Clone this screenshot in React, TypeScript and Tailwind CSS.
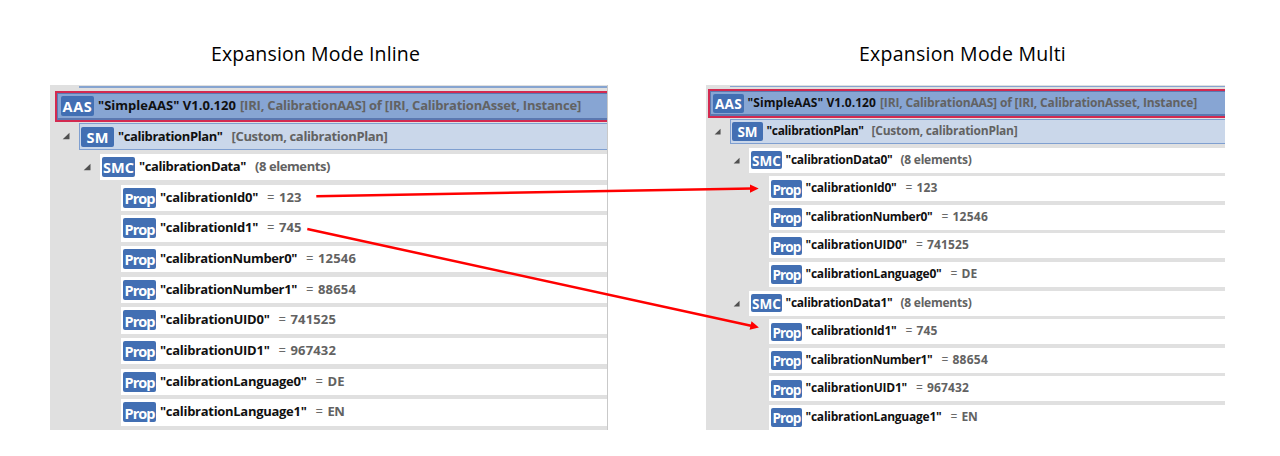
import { useLayoutEffect, useRef } from "react";
import clsx from "clsx";

type Kind = "AAS" | "SM" | "SMC" | "Prop";
// name, name width, gap before the detail, detail, detail width
type Row = [Kind, string, number, number, string, number];

const left: Row[] = [
  ["AAS", '"SimpleAAS" V1.0.120', 138, 4, "[IRI, CalibrationAAS] of [IRI, CalibrationAsset, Instance]", 341],
  ["SM", '"calibrationPlan"', 104.5, 9, "[Custom, calibrationPlan]", 156],
  ["SMC", '"calibrationData"', 107, 9, "(8 elements)", 75],
  ["Prop", '"calibrationId0"', 98, 9, "123", 22.5],
  ["Prop", '"calibrationId1"', 98, 9, "745", 22.5],
  ["Prop", '"calibrationNumber0"', 137, 9, "12546", 38],
  ["Prop", '"calibrationNumber1"', 137, 9, "88654", 38],
  ["Prop", '"calibrationUID0"', 109.5, 9, "741525", 45.5],
  ["Prop", '"calibrationUID1"', 109.5, 9, "967432", 45.5],
  ["Prop", '"calibrationLanguage0"', 146.5, 9, "DE", 17],
  ["Prop", '"calibrationLanguage1"', 146.5, 9, "EN", 17],
];

const right: Row[] = [
  ["AAS", '"SimpleAAS" V1.0.120', 128.5, 4, "[IRI, CalibrationAAS] of [IRI, CalibrationAsset, Instance]", 317],
  ["SM", '"calibrationPlan"', 97, 8, "[Custom, calibrationPlan]", 146],
  ["SMC", '"calibrationData0"', 107, 8, "(8 elements)", 71],
  ["Prop", '"calibrationId0"', 91, 9, "123", 21],
  ["Prop", '"calibrationNumber0"', 127, 9, "12546", 35.5],
  ["Prop", '"calibrationUID0"', 101.5, 9, "741525", 42],
  ["Prop", '"calibrationLanguage0"', 136, 9, "DE", 16],
  ["SMC", '"calibrationData1"', 107, 8, "(8 elements)", 71],
  ["Prop", '"calibrationId1"', 91, 9, "745", 21],
  ["Prop", '"calibrationNumber1"', 127, 9, "88654", 35.5],
  ["Prop", '"calibrationUID1"', 101.5, 9, "967432", 42],
  ["Prop", '"calibrationLanguage1"', 136, 9, "EN", 16],
];

/** One line of text whose tracking is set so that it fills the given width. */
function Fit({ text, width, className }: { text: string; width: number; className?: string }) {
  const ref = useRef<HTMLSpanElement>(null);
  useLayoutEffect(() => {
    const el = ref.current;
    if (!el) return;
    el.style.letterSpacing = "0px";
    const natural = el.getBoundingClientRect().width;
    el.style.letterSpacing = `${(width - natural) / text.length}px`;
  }, [text, width]);
  return (
    <span ref={ref} className={clsx("shrink-0 whitespace-pre", className)}>
      {text}
    </span>
  );
}

function Toggle({ small }: { small: boolean }) {
  return (
    <svg viewBox="0 0 8 8" className={clsx("shrink-0", small ? "size-[7px]" : "size-2")}>
      <path d="M7.5 0.8V7.3H0.7Z" fill="#505050" />
    </svg>
  );
}

function TreeRow({ row, small }: { row: Row; small: boolean }) {
  const [kind, name, nameWidth, gap, detail, detailWidth] = row;
  const indent = small
    ? { AAS: "pl-[2px]", SM: "pl-[8px]", SMC: "pl-[27px]", Prop: "pl-[63px]" }[kind]
    : { AAS: "pl-[5px]", SM: "pl-[12px]", SMC: "pl-[33px]", Prop: "pl-[71px]" }[kind];
  const box = {
    AAS: "border-y-2 border-l-2 border-[#d32a50] bg-[#87a5d3] shadow-[inset_1px_1px_0_#5b78b0,inset_0_-2px_0_#5b78b0]",
    SM: "border-y border-l border-[#7f9fd0] bg-[#cad7ea]",
    SMC: "bg-white",
    Prop: "bg-white",
  }[kind];
  const boxPad = {
    AAS: small ? "pl-[3px]" : "pl-[4px]",
    SM: "pl-[1px]",
    SMC: "pl-[2px]",
    Prop: "pl-[2px]",
  }[kind];
  return (
    <div className={clsx("flex shrink-0 items-start", small ? "h-[28.6px]" : "h-[30.67px]", indent)}>
      {(kind === "SM" || kind === "SMC") && (
        <span className={clsx("flex shrink-0 items-center", small ? "h-[25px] w-[16px]" : "h-[26px] w-[17px]")}>
          <Toggle small={small} />
        </span>
      )}
      <div
        className={clsx(
          "flex min-w-0 flex-1 items-center",
          box,
          boxPad,
          kind === "AAS" ? (small ? "-mt-[1.5px] h-[29px]" : "-mt-[2px] h-[31px]") : small ? "h-[25px]" : "h-[26.5px]",
        )}
      >
        <span
          className={clsx(
            "flex shrink-0 items-center justify-center rounded-[2px] bg-[#426fb3] font-['Open_Sans',sans-serif] font-bold text-white",
            small ? "h-[18.5px] w-[31px] pt-[2px] text-[13.5px]" : "h-5 w-[33px] pt-[2px] text-[14.5px]",
          )}
        >
          <Fit text={kind} width={small ? { AAS: 27, SM: 20, SMC: 29, Prop: 28 }[kind] : { AAS: 30, SM: 22, SMC: 31, Prop: 30 }[kind]} />
        </span>
        <span
          className={clsx(
            "flex shrink-0 items-center pb-[1px] font-['Open_Sans',sans-serif] leading-none",
            small ? "pl-[3.5px] text-[12px]" : "pl-[4px] text-[13px]",
          )}
        >
          <Fit text={name} width={nameWidth} className="font-bold text-[#101010]" />
          <span className="shrink-0" style={{ width: gap }} />
          {kind === "Prop" && (
            <span className={clsx("shrink-0 font-normal text-[#6a6a6a]", small ? "w-[11px]" : "w-[12px]")}>=</span>
          )}
          <Fit text={detail} width={detailWidth} className="font-bold text-[#626262]" />
        </span>
      </div>
    </div>
  );
}

function Tree({ rows, small }: { rows: Row[]; small: boolean }) {
  return (
    <div className={clsx("flex h-[345px] flex-col overflow-hidden bg-[#e0e0e0]", small ? "w-[519px]" : "w-[558px] border-r border-[#c9c9c9]")}>
      <div className={clsx("shrink-0 pt-px", small ? "h-[5.5px] pl-[24px]" : "h-[7.6px] pl-[29px]")}>
        <div className={clsx("bg-[#86a4d0]", small ? "h-px" : "h-[2px]")} />
      </div>
      {rows.map((row, i) => (
        <TreeRow key={i} row={row} small={small} />
      ))}
    </div>
  );
}

export default function App() {
  return (
    <main className="relative h-[456px] w-[1280px] overflow-hidden bg-white">
      <div className="flex pl-[50px]">
        <section className="w-[656px]">
          <h1 className="flex h-[85px] items-start pt-[42px] pl-[161px] font-['Open_Sans',sans-serif] text-[19.5px] leading-6 text-black">
            <Fit text="Expansion Mode Inline" width={209} />
          </h1>
          <Tree rows={left} small={false} />
        </section>
        <section className="w-[519px]">
          <h1 className="flex h-[85px] items-start pt-[42px] pl-[153px] font-['Open_Sans',sans-serif] text-[19.5px] leading-6 text-black">
            <Fit text="Expansion Mode Multi" width={207} />
          </h1>
          <Tree rows={right} small />
        </section>
      </div>
      <svg className="pointer-events-none absolute inset-0" width="1280" height="456" viewBox="0 0 1280 456">
        <g stroke="#ff0000" strokeWidth="2.5" fill="#ff0000">
          <path d="M316.3 196.2L752 188.6" />
          <path d="M307.3 229L751 325.8" />
          <path d="M750 184.4L758.7 188.5L750 192.8Z" strokeWidth="0" />
          <path d="M751.5 321.3L758.9 327.6L749.6 329.8Z" strokeWidth="0" />
        </g>
      </svg>
    </main>
  );
}
